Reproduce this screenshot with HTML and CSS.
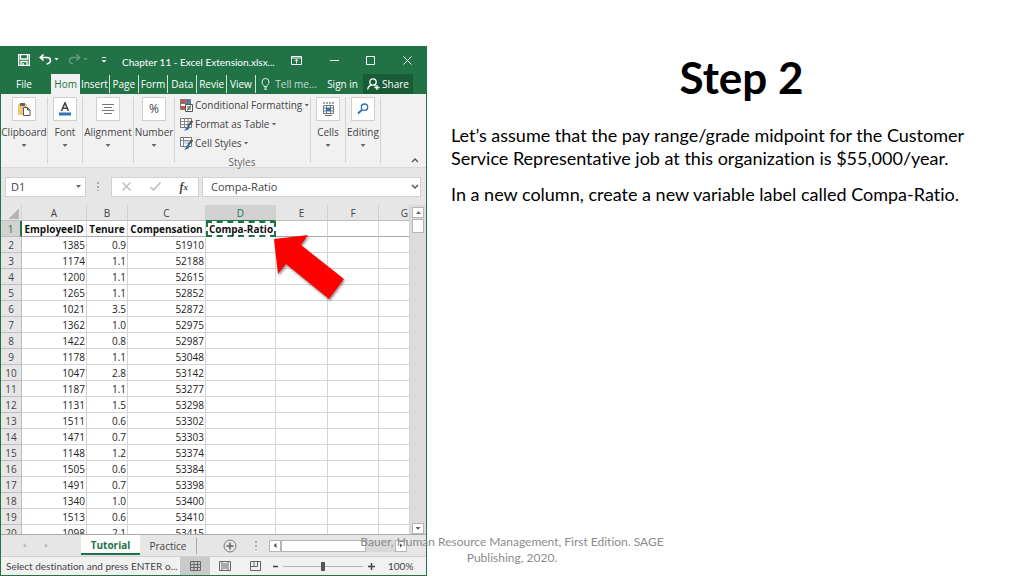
FILE: index.html
```html
<!DOCTYPE html>
<html lang="en">
<head>
<meta charset="utf-8">
<title>Step 2</title>
<link rel="stylesheet" href="styles.css">
</head>
<body>
<main class="slide">
<section class="app" aria-label="Spreadsheet">
  <header class="titlebar">
    <div class="quick">
      <button aria-label="Save"><svg width="12" height="12" viewBox="0 0 12 12"><path d="M.7.7h10.6v10.6H.7zM2.5 1v4h7V1M3 11V7.5h6V11M5 9v2" fill="none" stroke="#fff" stroke-width="1.3"/></svg></button>
      <button aria-label="Undo"><svg width="20" height="12" viewBox="0 0 20 12"><path d="M4.500.500 1.300 3.500l3.200 3M1.500 3.500H8c2.500 0 3.500 1.600 3.500 3S10 9.800 7.500 9.800" fill="none" stroke="#fff" stroke-width="1.700"/><path d="M15.500 4h4l-2 2.500z" fill="#fff"/></svg></button>
      <button class="faded" aria-label="Redo"><svg width="20" height="12" viewBox="0 0 20 12"><path d="m8.500.500 3.200 3-3.200 3M11.500 3.500H5C2.500 3.500 1.500 5.100 1.500 6.500S3 9.800 5 9.800" fill="none" stroke="#fff" stroke-width="1.500"/><path d="M15.500 4h4l-2 2.500z" fill="#fff"/></svg></button>
      <button aria-label="Customize toolbar"><svg width="6" height="8" viewBox="0 0 6 8"><path d="M1 1.500h4" stroke="#fff"/><path d="M.500 4h5L3 6.500z" fill="#fff"/></svg></button>
    </div>
    <h2 class="doc">Chapter 11 - Excel Extension.xlsx...</h2>
    <div class="window">
      <button aria-label="Ribbon options"><svg width="11" height="9" viewBox="0 0 11 9"><path d="M.500.500h10v8H.500zM.500 2h10M5.500 7.500v-4M3.500 5.200l2-2 2 2" fill="none" stroke="#fff"/></svg></button>
      <button aria-label="Minimize"><svg width="9" height="9" viewBox="0 0 9 9"><path d="M0 4.500h9" stroke="#fff"/></svg></button>
      <button aria-label="Maximize"><svg width="9" height="9" viewBox="0 0 9 9"><path d="M.500.500h8v8h-8z" fill="none" stroke="#fff"/></svg></button>
      <button aria-label="Close"><svg width="9" height="9" viewBox="0 0 9 9"><path d="m.500.500 8 8m0-8-8 8" stroke="#fff"/></svg></button>
    </div>
  </header>
  <nav class="tabs">
    <button class="file">File</button>
    <button class="tab current">Hom</button>
    <button class="tab">Insert</button>
    <button class="tab">Page</button>
    <button class="tab">Form</button>
    <button class="tab">Data</button>
    <button class="tab">Revie</button>
    <button class="tab">View</button>
    <button class="tell"><svg width="9" height="12" viewBox="0 0 9 12"><path d="M3 8.500C3 7 1 6.300 1 4a3.500 3.500 0 0 1 7 0c0 2.300-2 3-2 4.500zM3 10h3M3.500 11.500h2" fill="none" stroke="#e6f0ea"/></svg>Tell me...</button>
    <button class="sign">Sign in</button>
    <button class="share"><svg width="13" height="12" viewBox="0 0 13 12"><circle cx="6" cy="4" r="3.200" fill="none" stroke="#fff" stroke-width="1.300"/><path d="M.700 11.500C1 9 2.500 7.500 4.500 7M7 7l1.500 1M10 7v5M7.500 9.500h5" fill="none" stroke="#fff" stroke-width="1.300"/></svg>Share</button>
  </nav>
  <div class="ribbon">
    <button class="group clip"><span class="tile"><svg width="14" height="14" viewBox="0 0 14 14"><path d="M1 2h9v11H1z" fill="#eec67e"/><path d="M3 1h5v3H3z" fill="#666"/><path d="M6.500 5.500h4l2.500 2.500v5.500H6.500z" fill="#fff" stroke="#555"/><path d="M10.500 5.500V8H13" fill="none" stroke="#555"/></svg></span>Clipboard<i class="caret"></i></button>
    <button class="group font"><span class="tile"><svg width="14" height="14" viewBox="0 0 14 14"><path d="M3.500 9 7 .800 10.500 9M4.800 6.200h4.400" fill="none" stroke="#444" stroke-width="1.600"/><path d="M1 10.500h12v3H1z" fill="#2f73b8"/></svg></span>Font<i class="caret"></i></button>
    <button class="group align"><span class="tile"><svg width="12" height="12" viewBox="0 0 12 12"><path d="M0 1.500h12M2 4.500h8M0 7.500h12M2 10.500h8" stroke="#777"/></svg></span>Alignment<i class="caret"></i></button>
    <button class="group number"><span class="tile pct">%</span>Number<i class="caret"></i></button>
    <div class="styles">
      <button><svg width="13" height="13" viewBox="0 0 13 13"><path d="M.500.500h10v10H.500z" fill="#fff" stroke="#777"/><path d="M1 1h4v3H1zM1 7h4v3H1z" fill="#d0533e"/><path d="M6 1h4v3H6z" fill="#4a7fb5"/><path d="M1 4.500h9M5.500 1v9" stroke="#777"/><path d="M5.500 5.500h7v7h-7z" fill="#fff" stroke="#555"/><path d="M7 8h4M7 10h4M10.500 6.500l-3 5" stroke="#555"/></svg>Conditional Formatting<i class="caret"></i></button>
      <button><svg width="13" height="13" viewBox="0 0 13 13"><path d="M.500.500h11v9H.500z" fill="#fff" stroke="#777"/><path d="M1 3.500h10M1 6.500h10M4.500 1v8M8 1v8" stroke="#888"/><path d="M12.500 3 8 8" stroke="#555" stroke-width="2"/><path d="M8.500 7.500 10 9c-1 3-4 3.500-6 3.500 2-1 2-4 4.500-5z" fill="#2f73b8"/></svg>Format as Table<i class="caret"></i></button>
      <button><svg width="13" height="13" viewBox="0 0 13 13"><path d="M.500.500h11v9H.500z" fill="#fff" stroke="#777"/><path d="M3 3h6v4H3z" fill="#c6d9ec"/><path d="M1 3.500h10M3.500 1v8" stroke="#888"/><path d="M12.500 3 8 8" stroke="#555" stroke-width="2"/><path d="M8.500 7.500 10 9c-1 3-4 3.500-6 3.500 2-1 2-4 4.500-5z" fill="#2f73b8"/></svg>Cell Styles<i class="caret"></i></button>
      <span class="caption">Styles</span>
    </div>
    <button class="group cells"><span class="tile"><svg width="13" height="14" viewBox="0 0 13 14"><path d="M1 1h11" stroke="#444" stroke-dasharray="2 1"/><path d="M1.500 3.500h10v8h-10zM1.500 6h10M1.500 9h10M4.500 3.500v8M8.500 3.500v8M3 13.500h7" fill="none" stroke="#777"/><path d="M4 6h5v3H4z" fill="#2f73b8"/></svg></span>Cells<i class="caret"></i></button>
    <button class="group edit"><span class="tile"><svg width="12" height="12" viewBox="0 0 12 12"><circle cx="7.500" cy="4.200" r="3.200" fill="#fff" stroke="#2f73b8" stroke-width="1.300"/><path d="M5 6.800 1 10.500" stroke="#2f73b8" stroke-width="1.900"/></svg></span>Editing<i class="caret"></i></button>
    <button class="collapse" aria-label="Collapse ribbon"><svg width="8" height="5" viewBox="0 0 8 5"><path d="m1 4 3-3 3 3" fill="none" stroke="#555" stroke-width="1.300"/></svg></button>
  </div>
  <div class="formula">
    <div class="box namebox"><input aria-label="Name box" value="D1"><i class="caret"></i></div>
    <span class="grip"></span>
    <div class="box tools">
      <button aria-label="Cancel"><svg width="9" height="9" viewBox="0 0 9 9"><path d="m.500.500 8 8m0-8-8 8" stroke="#bbb" stroke-width="1.300"/></svg></button>
      <button aria-label="Enter"><svg width="11" height="9" viewBox="0 0 11 9"><path d="m.500 5 3 3L10.500.500" fill="none" stroke="#bbb" stroke-width="1.500"/></svg></button>
      <button class="fx" aria-label="Insert function">f<small>x</small></button>
    </div>
    <div class="box entry"><input aria-label="Formula bar" value="Compa-Ratio"><svg width="8" height="6" viewBox="0 0 8 6"><path d="m1 1 3 3 3-3" fill="none" stroke="#555" stroke-width="1.500"/></svg></div>
  </div>
  <div class="sheet">
    <div class="grid">
      <table>
        <colgroup><col class="n"><col class="a"><col class="b"><col class="c"><col class="d"><col class="e"><col class="f"><col></colgroup>
        <thead><tr><th class="corner"></th><th>A</th><th>B</th><th>C</th><th class="sel">D</th><th>E</th><th>F</th><th class="g">G</th></tr></thead>
        <tbody>
        <tr class="names"><th class="sel">1</th><td>EmployeeID</td><td>Tenure</td><td>Compensation</td><td class="copied">Compa-Ratio</td><td></td><td></td><td></td></tr>
        <tr><th>2</th><td>1385</td><td>0.9</td><td>51910</td><td></td><td></td><td></td><td></td></tr>
        <tr><th>3</th><td>1174</td><td>1.1</td><td>52188</td><td></td><td></td><td></td><td></td></tr>
        <tr><th>4</th><td>1200</td><td>1.1</td><td>52615</td><td></td><td></td><td></td><td></td></tr>
        <tr><th>5</th><td>1265</td><td>1.1</td><td>52852</td><td></td><td></td><td></td><td></td></tr>
        <tr><th>6</th><td>1021</td><td>3.5</td><td>52872</td><td></td><td></td><td></td><td></td></tr>
        <tr><th>7</th><td>1362</td><td>1.0</td><td>52975</td><td></td><td></td><td></td><td></td></tr>
        <tr><th>8</th><td>1422</td><td>0.8</td><td>52987</td><td></td><td></td><td></td><td></td></tr>
        <tr><th>9</th><td>1178</td><td>1.1</td><td>53048</td><td></td><td></td><td></td><td></td></tr>
        <tr><th>10</th><td>1047</td><td>2.8</td><td>53142</td><td></td><td></td><td></td><td></td></tr>
        <tr><th>11</th><td>1187</td><td>1.1</td><td>53277</td><td></td><td></td><td></td><td></td></tr>
        <tr><th>12</th><td>1131</td><td>1.5</td><td>53298</td><td></td><td></td><td></td><td></td></tr>
        <tr><th>13</th><td>1511</td><td>0.6</td><td>53302</td><td></td><td></td><td></td><td></td></tr>
        <tr><th>14</th><td>1471</td><td>0.7</td><td>53303</td><td></td><td></td><td></td><td></td></tr>
        <tr><th>15</th><td>1148</td><td>1.2</td><td>53374</td><td></td><td></td><td></td><td></td></tr>
        <tr><th>16</th><td>1505</td><td>0.6</td><td>53384</td><td></td><td></td><td></td><td></td></tr>
        <tr><th>17</th><td>1491</td><td>0.7</td><td>53398</td><td></td><td></td><td></td><td></td></tr>
        <tr><th>18</th><td>1340</td><td>1.0</td><td>53400</td><td></td><td></td><td></td><td></td></tr>
        <tr><th>19</th><td>1513</td><td>0.6</td><td>53410</td><td></td><td></td><td></td><td></td></tr>
        <tr><th>20</th><td>1098</td><td>2.1</td><td>53415</td><td></td><td></td><td></td><td></td></tr>
        </tbody>
      </table>
    </div>
    <div class="vscroll">
      <button aria-label="Scroll up"><i class="caret up"></i></button>
      <span class="thumb"></span>
      <button class="down" aria-label="Scroll down"><i class="caret"></i></button>
    </div>
    <svg class="arrow" width="84" height="74" viewBox="0 0 84 74"><path d="m4 8 34-4-7 10 43 34-15 20-43-35-8 10z" fill="#fe0000"/></svg>
  </div>
  <div class="sheets">
    <div class="steps"><i class="left"></i><i class="right"></i></div>
    <button class="active">Tutorial</button>
    <button class="other">Practice</button>
    <button class="add" aria-label="New sheet"><svg width="14" height="14" viewBox="0 0 14 14"><path d="M7 3.500v7M3.500 7h7" stroke="#666" stroke-width="1.500"/><circle cx="7" cy="7" r="6" fill="none" stroke="#777"/></svg></button>
    <span class="grip"></span>
    <div class="hscroll"><button aria-label="Scroll left"><i class="left"></i></button><span class="bar"></span><button class="end" aria-label="Scroll right"><i class="right"></i></button></div>
  </div>
  <footer class="status">
    <span class="message">Select destination and press ENTER o...</span>
    <button class="view on" aria-label="Normal view"><svg width="11" height="10" viewBox="0 0 11 10"><path d="M.500.500h10v9H.500zM.500 3.500h10M.500 6.500h10M4 .500v9M7.500.500v9" fill="none" stroke="#666"/></svg></button>
    <button class="view" aria-label="Page layout"><svg width="12" height="10" viewBox="0 0 12 10"><path d="M.500.500h11v9H.500zM3 .500v9M9 .500v9M4 3h4M4 5h4M4 7h4" fill="none" stroke="#666"/></svg></button>
    <button class="view" aria-label="Page break preview"><svg width="11" height="10" viewBox="0 0 11 10"><path d="M.500 9.500v-9h10v9zM4 .500v5H.500M7.500.500v5H4" fill="none" stroke="#666"/></svg></button>
    <button class="sign-btn" aria-label="Zoom out"><svg width="7" height="7" viewBox="0 0 7 7"><path d="M1 3.500h5" stroke="#444" stroke-width="1.500"/></svg></button>
    <input type="range" aria-label="Zoom" min="0" max="100" value="50">
    <button class="sign-btn" aria-label="Zoom in"><svg width="7" height="7" viewBox="0 0 7 7"><path d="M0 3.500h7M3.500 0v7" stroke="#444" stroke-width="1.500"/></svg></button>
    <span class="percent">100%</span>
  </footer>
</section>
<article class="copy">
  <h1>Step 2</h1>
  <p>Let’s assume that the pay range/grade midpoint for the Customer Service Representative job at this organization is $55,000/year.</p>
  <p>In a new column, create a new variable label called Compa-Ratio.</p>
</article>
<p class="credit">Bauer, Human Resource Management, First Edition. SAGE Publishing, 2020.</p>
</main>
</body>
</html>
```

FILE: styles.css
```css
* { box-sizing: border-box; }
body { margin: 0; background: #fff; font-variant-ligatures: none; }
button, input { font: inherit; font-variant-ligatures: none; color: inherit; border: 0; padding: 0; margin: 0; background: none; }
button { display: flex; align-items: center; justify-content: center; white-space: nowrap; }
svg { display: block; flex: none; }

.slide { position: relative; display: grid; grid-template-columns: 427fr 597fr; min-height: 100vh; padding-top: 46px; }
.app { display: flex; flex-direction: column; min-width: 0; border: 1px solid #217346; border-top: 0; background: #e6e6e6; color: #444; font-family: "Open Sans", "Noto Sans", sans-serif; font-size: 10px; line-height: 14px; }

.titlebar { display: flex; align-items: center; height: 28px; background: #217346; color: #fff; }
.quick { display: flex; align-items: center; gap: 9px; flex: none; padding-left: 17px; width: 121px; }
.quick button:last-child { margin-left: 4px; }
.faded { opacity: 0.3; }
.doc { flex: 1; margin: 3px 0 0; font-family: Lato, sans-serif; font-size: 10px; font-weight: 400; white-space: nowrap; }
.window { display: flex; align-items: center; justify-content: space-between; width: 135px; padding-right: 14px; }

.tabs { display: flex; height: 20px; background: #217346; color: #fff; }
.file { flex: none; width: 50px; padding-right: 4px; }
.tab { flex: 1 1 30px; min-width: 0; border-right: 1px solid #d3e3da; height: 18px; margin-top: 1px; }
.current { background: #f1f1f1; color: #217346; border: 0; height: 20px; margin: 0; }
.tell { flex: none; width: 66px; gap: 5px; color: #c7dccf; }
.sign { flex: none; width: 41px; }
.share { flex: none; width: 50px; margin-right: 13px; gap: 2px; background: #185c37; }

.ribbon { display: flex; height: 74px; padding-top: 3px; background: #f1f1f1; border-bottom: 1px solid #dadada; }
.group { flex: none; flex-direction: column; justify-content: flex-start; height: 66px; border-right: 1px solid #d4d4d4; }
.tile { display: flex; align-items: center; justify-content: center; width: 24px; height: 24px; margin-bottom: 4px; border: 1px solid #cfcfcf; background: #fff; }
.pct { font-size: 12px; }
.caret { flex: none; width: 5px; height: 3px; background: #666; clip-path: polygon(0 0, 100% 0, 50% 100%); }
.up { transform: rotate(180deg); }
.group .caret { margin-top: 5px; }
.clip { width: 47px; }
.font { width: 35px; }
.align { width: 51px; }
.number { width: 41px; }
.styles { display: flex; flex: 1; min-width: 0; flex-direction: column; gap: 5px; padding: 1px 0 0 5px; border-right: 1px solid #d4d4d4; height: 66px; }
.styles button { justify-content: flex-start; gap: 2px; }
.caption { text-align: center; color: #666; padding-right: 6px; }
.cells, .edit { width: 35px; }
.collapse { width: 45px; align-items: flex-end; padding: 0 0 4px 22px; }

.formula { display: flex; align-items: center; height: 37px; padding: 0 5px 0 4px; }
.box { display: flex; align-items: center; height: 20px; background: #fff; border: 1px solid #d0d0d0; }
.box input { flex: 1; min-width: 0; font-size: 11px; }
.namebox { width: 81px; padding: 0 4px 0 5px; }
.grip { width: 2px; height: 9px; margin: 0 12px 0 11px; background: repeating-linear-gradient(#aaa 0 2px, transparent 2px 4px); }
.tools { width: 88px; justify-content: space-between; padding: 0 10px; }
.fx { font: italic 700 12px/12px "Liberation Serif", serif; }
.fx small { font-size: 9px; }
.entry { flex: 1; margin-left: 3px; padding: 0 1px 0 8px; }

.sheet { position: relative; display: flex; flex: 1 1 0; min-height: 330px; overflow: hidden; border-bottom: 1px solid #ababab; }
.grid { flex: 1; min-width: 0; height: 0; }
table { width: 100%; table-layout: fixed; border-collapse: separate; border-spacing: 0; line-height: 13px; color: #222; }
tr { height: 16px; }
th, td { height: 16px; padding: 2px 1px 0; border: 0 solid #d4d4d4; border-width: 0 1px 1px 0; white-space: nowrap; }
th { background: #e6e6e6; color: #444; font-weight: 400; border-color: #bdbdbd; }
td { background: #fff; text-align: right; }
thead th { border-right-color: #cfcfcf; }
.n { width: 21px; }
.a { width: 65px; }
.b { width: 41px; }
.c { width: 78px; }
.d { width: 70px; }
.e { width: 52px; }
.f { width: 51px; }
.g { text-align: right; }
.corner { background: linear-gradient(135deg, #e6e6e6 50%, #b4b4b4 50%) 8px 4px / 10px 10px no-repeat #e6e6e6; }
th.sel { background: #d2d2d2; color: #217346; border-bottom-color: #217346; }
tbody th.sel { border-bottom-color: #bdbdbd; border-right: 2px solid #217346; }
.names td { font-weight: 700; text-align: center; color: #111; border-bottom-color: #aaa; }
.names td.copied { padding: 0; border: 2px dashed #217346; line-height: 12px; }

.vscroll { display: flex; flex-direction: column; align-items: center; width: 16px; padding: 2px 0 0; background: #dcdcdc; }
.vscroll button, .thumb { width: 12px; height: 11px; border: 1px solid #b5b5b5; background: #fff; }
.thumb { height: 14px; margin-top: 1px; }
.down { margin-top: auto; }
.arrow { position: absolute; left: 269px; top: 26px; filter: drop-shadow(1px 2px 1px rgba(0, 0, 0, 0.4)); }

.sheets { display: flex; align-items: center; height: 22px; border-bottom: 1px solid #d0d0d0; }
.steps { display: flex; gap: 19px; width: 80px; padding-left: 22px; }
.left, .right { width: 3px; height: 5px; background: #bbb; clip-path: polygon(100% 0, 100% 100%, 0 50%); }
.right { clip-path: polygon(0 0, 100% 50%, 0 100%); }
.sheets button { flex: none; }
.active { width: 59px; height: 20px; padding-top: 2px; align-self: flex-start; font-size: 10px; font-weight: 700; color: #217346; background: #fff; border-bottom: 2px solid #217346; }
.other { width: 57px; height: 16px; font-size: 10px; border-right: 1px solid #aaa; }
.add { width: 66px; }
.sheets .grip { margin: 0 12px 0 -8px; }
.hscroll { display: flex; flex: 1; height: 12px; margin-right: 19px; background: #d8d8d8; }
.hscroll button { width: 12px; height: 12px; background: #fff; border: 1px solid #b5b5b5; }
.hscroll i { background: #555; }
.bar { width: 85px; background: #fff; border: 1px solid #b5b5b5; }
.end { margin-left: auto; }

.status { display: flex; align-items: center; height: 18px; background: #f1f1f1; }
.message { flex: 1; min-width: 0; padding-left: 5px; white-space: nowrap; font-family: Lato, sans-serif; }
.view { flex: none; width: 30px; height: 18px; }
.on { background: #cacaca; }
.sign-btn { width: 10px; }
.status input { appearance: none; width: 80px; height: 12px; margin: 0 3px; background: linear-gradient(#b5b5b5, #b5b5b5) center / 100% 1px no-repeat; }
.status input::-webkit-slider-thumb { appearance: none; width: 4px; height: 9px; background: #555; }
.percent { width: 50px; padding-left: 12px; font-family: Lato, sans-serif; }

.copy { padding: 4px 48px 0 24px; color: #000; font-family: Lato, sans-serif; font-size: 18px; line-height: 23px; }
.copy h1 { margin: 0 -56px 20px 0; font-size: 44px; line-height: 54px; font-weight: 700; text-align: center; }
.copy p { margin: 0 0 13px; }
.credit { position: absolute; left: 0; right: 0; bottom: 10px; width: 310px; margin: 0 auto; text-align: center; color: #8b8b8b; font-family: Lato, sans-serif; font-size: 12px; line-height: 16px; }
```
